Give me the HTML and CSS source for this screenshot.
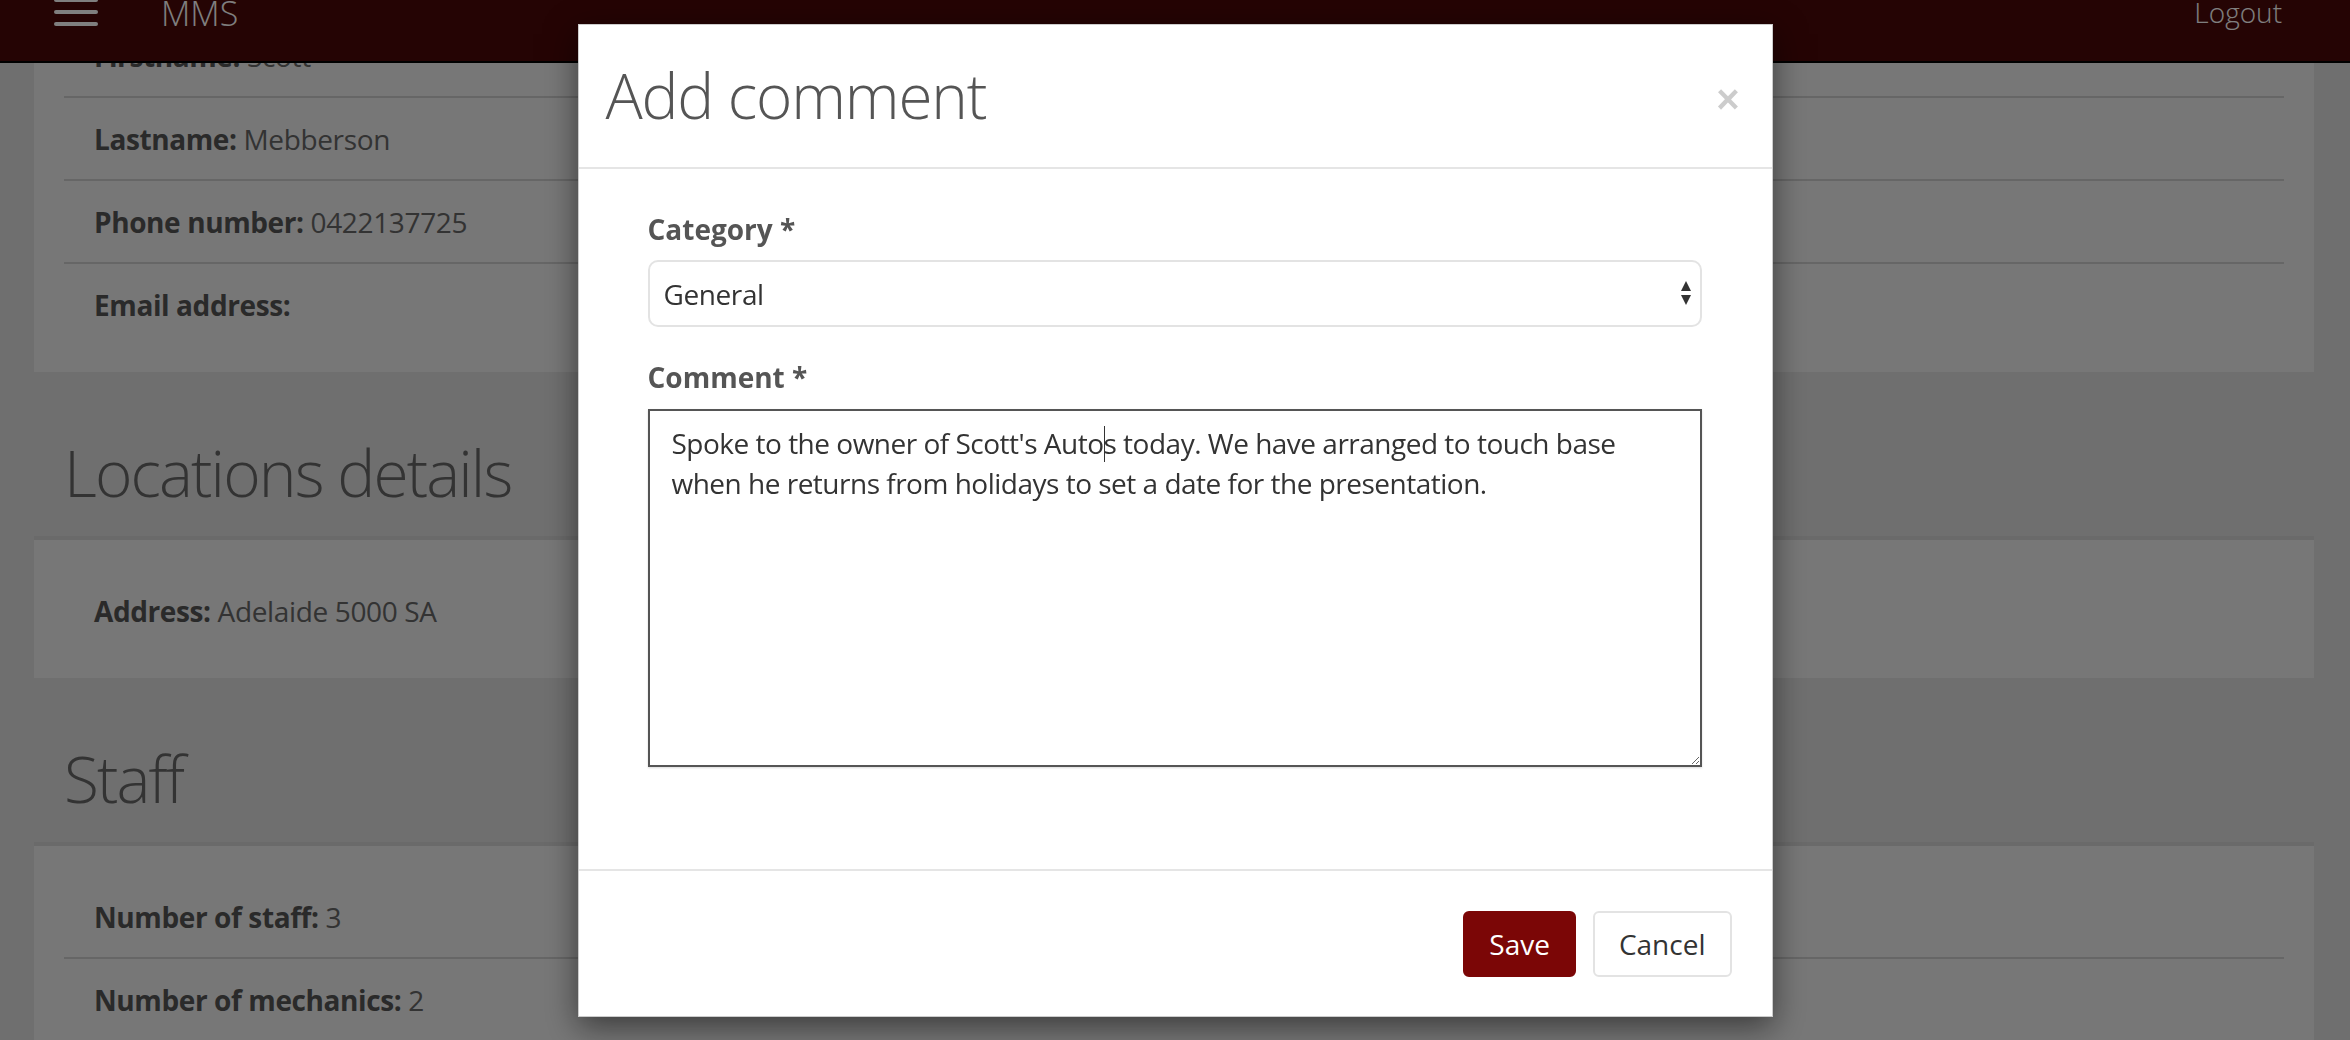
FILE: index.html
```html
<!DOCTYPE html>
<html lang="en">
<head>
<meta charset="utf-8">
<title>MMS - Add comment</title>
<link rel="stylesheet" href="styles.css">
</head>
<body>
<header class="navbar">
  <div class="nav-left">
    <span class="hamburger" aria-label="Menu"><span></span><span></span><span></span></span>
    <span class="brand">MMS</span>
  </div>
  <a class="logout">Logout</a>
</header>

<main class="page">
  <section class="card card-first">
    <div class="row"><b>Firstname:</b> Scott</div>
    <div class="row"><b>Lastname:</b> Mebberson</div>
    <div class="row"><b>Phone number:</b> 0422137725</div>
    <div class="row"><b>Email address:</b></div>
  </section>

  <h2 class="section-title">Locations details</h2>
  <section class="card card-top">
    <div class="row"><b>Address:</b> Adelaide 5000 SA</div>
  </section>

  <h2 class="section-title">Staff</h2>
  <section class="card card-top">
    <div class="row"><b>Number of staff:</b> 3</div>
    <div class="row"><b>Number of mechanics:</b> 2</div>
  </section>
</main>

<div class="backdrop"></div>

<div class="modal-wrap">
  <div class="modal">
    <div class="modal-header">
      <h4 class="modal-title">Add comment</h4>
      <button class="close" aria-label="Close">&times;</button>
    </div>
    <div class="modal-body">
      <div class="form-group">
        <label>Category *</label>
        <div class="select-wrap">
          <select><option>General</option></select>
          <svg class="arrows" width="12" height="26" viewBox="0 0 12 26"><path d="M6 1 L11 11 L1 11 Z" fill="#333"/><path d="M1 15 L11 15 L6 25 Z" fill="#333"/></svg>
        </div>
      </div>
      <div class="form-group">
        <label>Comment *</label>
        <div class="textarea" role="textbox">Spoke to the owner of Scott's Auto<span class="caret"></span>s today. We have arranged to touch base when he returns from holidays to set a date for the presentation.</div>
      </div>
    </div>
    <div class="modal-footer">
      <button class="btn btn-save">Save</button>
      <button class="btn btn-cancel">Cancel</button>
    </div>
  </div>
</div>
</body>
</html>
```
FILE: styles.css
```css
html {
  overflow: hidden;
}
body {
  margin: 0;
  height: 1040px;
  overflow: hidden;
  background: #dedede;
  font-family: "Open Sans", "Noto Sans", sans-serif;
}

/* navbar */
.navbar {
  position: fixed;
  top: 0;
  left: 0;
  right: 0;
  height: 61px;
  background: #4a0808;
  border-bottom: 2px solid #000;
  display: flex;
  justify-content: space-between;
  align-items: flex-start;
  z-index: 5;
}
.nav-left {
  display: flex;
  align-items: flex-start;
  padding-left: 54px;
}
.hamburger {
  display: flex;
  flex-direction: column;
  gap: 8px;
  margin-top: -2px;
  width: 44px;
}
.hamburger span {
  display: block;
  height: 4px;
  border-radius: 2px;
  background: #fff;
}
.brand {
  margin-left: 63px;
  margin-top: -4px;
  font-size: 34px;
  line-height: 34px;
  font-weight: 300;
  color: #fff;
}
.logout {
  margin-right: 68px;
  margin-top: -2px;
  font-size: 28px;
  line-height: 28px;
  font-weight: 300;
  color: #fff;
}

/* page content */
.page {
  margin: 0 36px 0 34px;
}
.card {
  background: #eeeeee;
  padding: 30px 30px 27px;
}
.card-first {
  margin-top: -15px;
}
.card-top {
  border-top: 4px solid #d4d4d4;
}
.row {
  padding: 21px 30px 20px;
  font-size: 28px;
  line-height: 40px;
  letter-spacing: -0.35px;
  color: #666;
  border-bottom: 2px solid #cccccc;
}
.row:last-child {
  border-bottom: 0;
}
.row b {
  color: #555;
  font-weight: 700;
  letter-spacing: -0.4px;
}
.section-title {
  margin: 66px 0 28px 30px;
  font-size: 64px;
  line-height: 70px;
  font-weight: 300;
  letter-spacing: -1.9px;
  color: #666;
}

/* modal */
.backdrop {
  position: fixed;
  inset: 0;
  background: rgba(0, 0, 0, 0.5);
  z-index: 10;
}
.modal-wrap {
  position: fixed;
  inset: 0;
  z-index: 20;
  display: flex;
  justify-content: center;
  align-items: flex-start;
  padding-top: 24px;
}
.modal {
  width: 1195px;
  box-sizing: border-box;
  background: #fff;
  border: 1px solid rgba(0, 0, 0, 0.2);
  box-shadow: 0 10px 30px rgba(0, 0, 0, 0.5);
}
.modal-header {
  height: 142px;
  padding: 0 32px 0 27px;
  display: flex;
  align-items: center;
  justify-content: space-between;
  border-bottom: 2px solid #e5e5e5;
}
.modal-title {
  margin: -2px 0 0;
  font-size: 62px;
  line-height: 70px;
  font-weight: 300;
  letter-spacing: -1.2px;
  color: #555;
}
.close {
  margin-top: 5px;
  background: none;
  border: 0;
  padding: 0;
  font-family: "Liberation Sans", Arial, sans-serif;
  font-size: 40px;
  line-height: 1;
  font-weight: 700;
  color: #000;
  opacity: 0.2;
}
.modal-body {
  padding: 40px 70px 102px 69px;
}
.form-group + .form-group {
  margin-top: 30px;
}
.form-group label {
  display: block;
  margin-bottom: 11px;
  font-size: 28px;
  line-height: 40px;
  font-weight: 700;
  color: #555;
}
.select-wrap {
  position: relative;
}
.select-wrap select {
  display: block;
  width: 100%;
  height: 67px;
  -webkit-appearance: none;
  appearance: none;
  border: 2px solid #e3e3e3;
  border-radius: 10px;
  background: #fff;
  padding: 0 14px;
  font-family: "Open Sans", "Noto Sans", sans-serif;
  font-size: 28px;
  letter-spacing: -0.4px;
  color: #333;
}
.arrows {
  position: absolute;
  right: 10px;
  top: 20px;
}
.textarea {
  box-sizing: border-box;
  height: 358px;
  margin-top: 12px;
  border: 2px solid #555;
  box-shadow: 0 1px 2px rgba(0, 0, 0, 0.15);
  padding: 12px 22px;
  font-size: 28px;
  line-height: 40px;
  letter-spacing: -0.5px;
  color: #333;
  background: #fff;
  resize: vertical;
  overflow: auto;
}
.caret {
  display: inline-block;
  width: 1px;
  height: 36px;
  margin-right: -1px;
  background: #333;
  vertical-align: -8px;
}
.modal-footer {
  height: 145px;
  padding-right: 40px;
  display: flex;
  align-items: center;
  justify-content: flex-end;
  gap: 17px;
  border-top: 2px solid #e5e5e5;
}
.btn {
  font-family: "Open Sans", "Noto Sans", sans-serif;
  font-size: 28px;
  line-height: 40px;
  padding: 11px 24px;
  border-radius: 6px;
  border: 2px solid transparent;
}
.btn-save {
  background: #7b0606;
  border-color: #7b0606;
  color: #fff;
}
.btn-cancel {
  background: #fff;
  border-color: #e3e3e3;
  color: #333;
}
```
